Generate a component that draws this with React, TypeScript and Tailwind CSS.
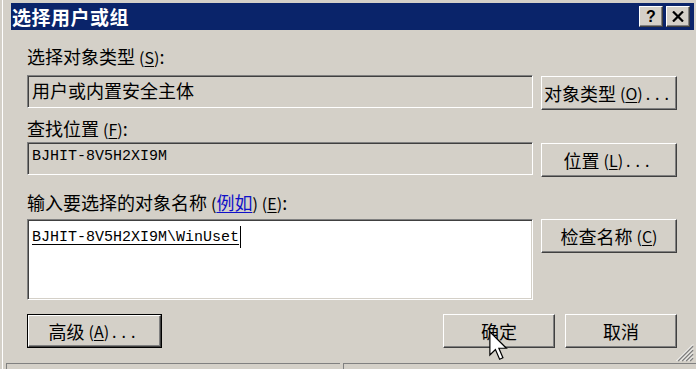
import React from "react";

const raised =
  "border border-t-white border-l-white border-b-[#404040] border-r-[#404040] shadow-[inset_-1px_-1px_0_#808080] bg-[#d4d0c8] flex items-center justify-center text-black whitespace-nowrap";
const sunken =
  "border border-t-[#808080] border-l-[#808080] border-b-white border-r-white shadow-[inset_1px_1px_0_#404040,inset_-1px_-1px_0_#d4d0c8]";

function Acc({ c, dots }: { c: string; dots?: boolean }) {
  return (
    <span className="text-[16px] ml-[4px]">
      (<span className="underline underline-offset-2">{c}</span>)
      {dots ? <span className="tracking-[5px] ml-[3px]">...</span> : null}
    </span>
  );
}

export default function App() {
  return (
    <div className="relative w-[696px] h-[369px] overflow-hidden bg-[#d4d0c8] font-['Noto_Sans_CJK_SC',sans-serif] text-black">
      <div className="flex h-full">
        <div className="w-[2px] shrink-0" />
        <div className="w-px shrink-0 bg-white" />
        <div className="flex-1 flex flex-col">
          {/* title bar */}
          <div className="mt-[3px] ml-[8px] mr-[2px] h-[27px] bg-[#0a246a] flex items-center pl-[1px] pr-[4px]">
            <span className="text-white font-bold text-[19px] leading-[27px] tracking-[0.5px]">
              选择用户或组
            </span>
            <div className="flex-1" />
            <div className={`${raised} w-[24px] h-[21px]`}>
              <span className="font-['Liberation_Sans',sans-serif] font-bold text-[16px] leading-none">?</span>
            </div>
            <div className={`${raised} w-[24px] h-[21px] ml-[3px]`}>
              <svg width="12" height="11" viewBox="0 0 12 11">
                <path d="M1 0.5 L11 10.5 M11 0.5 L1 10.5" stroke="#000" strokeWidth="2.2" />
              </svg>
            </div>
          </div>

          {/* content */}
          <div className="pl-[24px] w-[674px] flex flex-col">
            <div className="mt-[16px] h-[20px] text-[18px] leading-[20px] whitespace-nowrap">
              选择对象类型<Acc c="S" />:
            </div>
            <div className="mt-[9px] flex items-start">
              <div className={`${sunken} w-[506px] h-[33px] bg-[#d4d0c8] pl-[4px] text-[18px] leading-[28px]`}>
                用户或内置安全主体
              </div>
              <div className={`${raised} ml-[8px] mt-[1px] w-[136px] h-[34px] text-[18px]`}>
                对象类型<Acc c="O" dots />
              </div>
            </div>

            <div className="mt-[8px] h-[20px] text-[18px] leading-[20px] whitespace-nowrap">
              查找位置<Acc c="F" />:
            </div>
            <div className="mt-[4px] flex items-start">
              <div className={`${sunken} w-[506px] h-[33px] bg-[#d4d0c8] pl-[4px] font-['Liberation_Mono',monospace] text-[15px] leading-[28px]`}>
                BJHIT-8V5H2XI9M
              </div>
              <div className={`${raised} ml-[8px] mt-[1px] w-[136px] h-[34px] text-[18px]`}>
                位置<Acc c="L" dots />
              </div>
            </div>

            <div className="mt-[15px] h-[20px] text-[18px] leading-[20px] whitespace-nowrap">
              输入要选择的对象名称
              <span className="text-[16px] ml-[4px]">(</span>
              <span className="text-[#1010c8] underline underline-offset-2">例如</span>
              <span className="text-[16px]">)</span>
              <Acc c="E" />:
            </div>
            <div className="mt-[7px] flex items-start">
              <div className={`${sunken} w-[506px] h-[81px] bg-white pl-[4px] pt-[8px]`}>
                <div className="flex items-start">
                  <span className="font-['Liberation_Mono',monospace] text-[15px] leading-[20px] underline underline-offset-[3px]">
                    BJHIT-8V5H2XI9M\WinUset
                  </span>
                  <span className="w-px h-[22px] -mt-[2px] bg-black ml-[1px]" />
                </div>
              </div>
              <div className={`${raised} ml-[8px] w-[136px] h-[34px] text-[18px]`}>
                检查名称<Acc c="C" />
              </div>
            </div>

            <div className="mt-[14px] flex items-start">
              <div className="border border-black w-[135px] h-[34px]">
                <div className={`${raised} w-full h-full text-[18px]`}>
                  高级<Acc c="A" dots />
                </div>
              </div>
              <div className="flex-1" />
              <div className={`${raised} w-[112px] h-[34px] text-[18px]`}>确定</div>
              <div className={`${raised} ml-[10px] w-[112px] h-[34px] text-[18px]`}>取消</div>
            </div>
          </div>

          {/* status bar */}
          <div className="mt-[15px] ml-[3px] flex h-[20px]">
            <div className="w-[334px] border-t border-l border-t-[#808080] border-l-[#808080]" />
            <div className="ml-[3px] flex-1 border-t border-l border-t-[#808080] border-l-[#808080]" />
          </div>
        </div>
      </div>

      {/* resize grip */}
      <svg className="absolute right-[2px] bottom-[7px]" width="18" height="18" viewBox="0 0 18 18">
        <path d="M17 2 L2 17 M17 6 L6 17 M17 10 L10 17 M17 14 L14 17" stroke="#808080" strokeWidth="1.5" />
        <path d="M17 0.5 L0.5 17 M17 4.5 L4.5 17 M17 8.5 L8.5 17 M17 12.5 L12.5 17" stroke="#ffffff" strokeWidth="1" />
      </svg>

      {/* mouse cursor */}
      <svg className="absolute left-[489px] top-[331px]" width="19" height="30" viewBox="0 0 12.5 20">
        <path d="M0.5 0.5 L0.5 16 L4.2 12.4 L7 18.8 L9.2 17.8 L6.5 11.5 L11.5 11.5 Z" fill="#fff" stroke="#000" strokeWidth="0.8" strokeLinejoin="miter" />
      </svg>
    </div>
  );
}
